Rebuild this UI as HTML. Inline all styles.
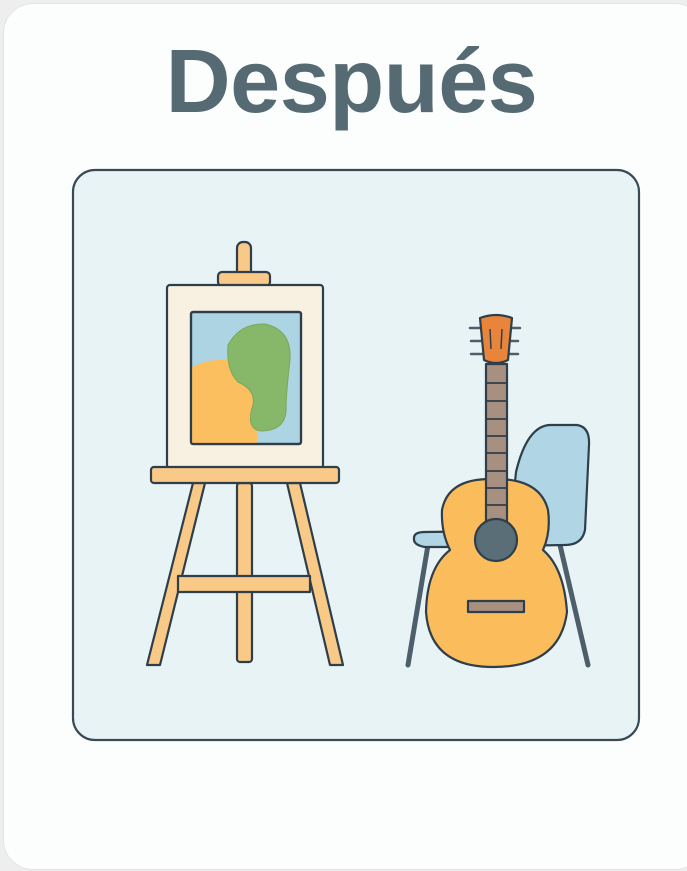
<!DOCTYPE html>
<html><head><meta charset="utf-8"><style>
html,body{margin:0;padding:0;width:687px;height:871px;background:#eeeeee;overflow:hidden}
.card{position:absolute;left:3px;top:3px;width:700px;height:865px;background:#fcfdfd;border:1px solid #e2e4e4;border-radius:30px}
h1{position:absolute;left:0;width:703px;top:37px;margin:0;text-align:center;font:bold 90px/1 "Liberation Sans",sans-serif;color:#566a73;letter-spacing:-0.5px}
svg{position:absolute;left:0;top:0}
</style></head><body>
<div class="card"></div>
<h1>Después</h1>
<svg width="687" height="871" viewBox="0 0 687 871" stroke="#2e3e4a" stroke-width="2.2" stroke-linejoin="round">
<rect x="73" y="170" width="566" height="570" rx="22" fill="#e8f3f5" stroke="#3a4a55"/>
<!-- easel -->
<rect x="237" y="242" width="14" height="35" rx="6" fill="#f8c987"/>
<rect x="218" y="272" width="52" height="14" rx="4" fill="#f8c987"/>
<polygon points="193,483 205,483 160,665 147,665" fill="#f8c987"/>
<polygon points="287,483 300,483 343,665 330,665" fill="#f8c987"/>
<rect x="237" y="483" width="15" height="179" rx="3" fill="#f8c987"/>
<rect x="178" y="576" width="132" height="16" fill="#f8c987"/>
<rect x="167" y="285" width="156" height="183" rx="3" fill="#f8f1e2"/>
<rect x="191" y="312" width="110" height="132" rx="2" fill="#acd4e2"/>
<path d="M192,367 Q210,358 232,360 Q255,368 257,395 Q258,425 257,443 L192,443 Z" fill="#fbbf60" stroke="none"/>
<path d="M228,345 Q240,323 265,324 Q292,330 290,360 Q287,385 286,405 Q288,430 262,431 Q245,430 253,405 Q256,390 238,382 Q226,370 228,345 Z" fill="#87b86a" stroke="#78a85c" stroke-width="1"/>
<rect x="191" y="312" width="110" height="132" rx="2" fill="none"/>
<rect x="151" y="467" width="188" height="16" rx="3" fill="#f8c987"/>
<!-- chair -->
<line x1="428" y1="545" x2="408" y2="665" stroke="#4d5f6a" stroke-width="5" stroke-linecap="round"/>
<line x1="560" y1="545" x2="588" y2="665" stroke="#4d5f6a" stroke-width="5" stroke-linecap="round"/>
<path d="M516,472 Q527,426 550,425 L577,425 Q590,427 589,445 L585,530 Q582,545 565,545 L450,547 L425,547 Q413,545 414,538 Q414,532 425,532 L510,531 Z" fill="#b0d6e5"/>
<!-- guitar -->
<g stroke="#4d5f6a" stroke-width="2.5" stroke-linecap="round">
<line x1="470" y1="328" x2="520" y2="328"/><line x1="471" y1="341" x2="518" y2="341"/><line x1="471" y1="354" x2="518" y2="354"/></g>
<path d="M493,479 Q448,478 442,510 Q441,532 450,550 Q427,568 426,612 Q430,667 493,667 Q560,667 567,612 Q564,568 543,550 Q551,532 548,510 Q540,478 493,479 Z" fill="#fbbd5c"/>
<rect x="486" y="364" width="21" height="165" fill="#a89080"/>
<g stroke-width="1.8"><line x1="486" y1="383" x2="507" y2="383"/><line x1="486" y1="401" x2="507" y2="401"/><line x1="486" y1="419" x2="507" y2="419"/><line x1="486" y1="436" x2="507" y2="436"/><line x1="486" y1="453" x2="507" y2="453"/><line x1="486" y1="471" x2="507" y2="471"/><line x1="486" y1="488" x2="507" y2="488"/><line x1="486" y1="505" x2="507" y2="505"/></g>
<path d="M480,318 Q496,312 512,318 L508,360 Q496,366 484,360 Z" fill="#e8853a"/>
<line x1="490" y1="329" x2="491" y2="349" stroke-width="1.5"/><line x1="502" y1="329" x2="501" y2="349" stroke-width="1.5"/>
<circle cx="496" cy="540" r="21" fill="#5a6e78"/>
<rect x="468" y="601" width="56" height="11" fill="#a89080"/>
</svg>
</body></html>
